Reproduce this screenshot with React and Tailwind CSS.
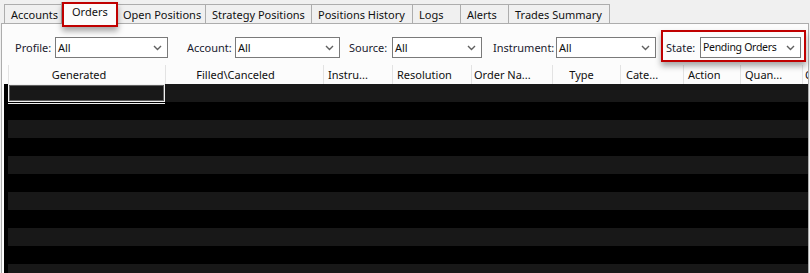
import React from "react";

const tabs = [
  ["Accounts", 58],
  ["Orders", 55, true],
  ["Open Positions", 89],
  ["Strategy Positions", 106],
  ["Positions History", 101],
  ["Logs", 48],
  ["Alerts", 48],
  ["Trades Summary", 101],
];

const cols = [
  ["Generated", 157, "center", "pr-[16px]"],
  ["Filled\\Canceled", 158, "center", "pr-[18px]"],
  ["Instru...", 69, "left", "pl-[4px]"],
  ["Resolution", 79, "left", "pl-[4px]"],
  ["Order Na...", 81, "left", "pl-[2px]"],
  ["Type", 68, "center", "pr-[10px]"],
  ["Cate...", 63, "left", "pl-[5px]"],
  ["Action", 57, "left", "pl-[4px]"],
  ["Quan...", 62, "left", "pl-[4px]"],
  ["Q", 40, "left", "pl-[2px]"],
];

function Chevron() {
  return (
    <svg width="9" height="6" viewBox="0 0 9 6" className="shrink-0">
      <polyline points="1,1 4.5,4.5 8,1" fill="none" stroke="#606060" strokeWidth="1.4" />
    </svg>
  );
}

function Select({ w, value, tight }) {
  return (
    <div
      className="h-[21px] shrink-0 border border-[#7a7a7a] bg-white flex items-center justify-between pl-[2px] pr-[5px] text-[#101010] whitespace-nowrap"
      style={{ width: w }}
    >
      <span className={tight ? "tracking-[-0.3px] text-[10.5px]" : ""}>{value}</span>
      <Chevron />
    </div>
  );
}

function Label({ w, ml, children }) {
  return (
    <span className="shrink-0" style={{ width: w, marginLeft: ml }}>
      {children}
    </span>
  );
}

export default function App() {
  return (
    <div
      className="relative w-[810px] h-[273px] overflow-hidden bg-[#f0f0f0] text-[11px] leading-none text-[#1a1a2e] whitespace-nowrap"
      style={{ fontFamily: '"Noto Sans", "Open Sans", sans-serif' }}
    >
      {/* tab strip */}
      <div className="relative z-10 flex items-end h-[23px] pl-[4px]">
        {tabs.map(([label, w, sel], i) =>
          sel ? (
            <div
              key={label}
              className="h-[22px] shrink-0 -mb-px -mx-[1px] border border-b-0 border-[#adadad] bg-[#fcfcfc] pl-[10px] pt-[3px] text-[#101010]"
              style={{ width: w + 2 }}
            >
              {label}
            </div>
          ) : (
            <div
              key={label}
              className={`h-[19px] shrink-0 border-t border-r border-[#adadad] bg-[#f0f0f0] pl-[6px] pt-[4px] text-[#101010] ${i === 0 ? "border-l" : ""}`}
              style={{ width: w }}
            >
              {label}
            </div>
          )
        )}
      </div>

      {/* panel */}
      <div className="ml-[1px] w-[808px] h-[251px] border border-[#adadad] bg-[#fcfcfc] flex flex-col">
        {/* filter row */}
        <div className="flex items-center h-[21px] mt-[13px] pl-[13px]">
          <Label w={40} ml={0}>Profile:</Label>
          <Select w={113} value="All" />
          <Label w={48} ml={19}>Account:</Label>
          <Select w={105} value="All" />
          <Label w={43} ml={9}>Source:</Label>
          <Select w={90} value="All" />
          <Label w={63} ml={11}>Instrument:</Label>
          <Select w={100} value="All" />
          <Label w={34} ml={10}>State:</Label>
          <Select w={101} value="Pending Orders" tight />
        </div>

        {/* grid */}
        <div className="mt-[7px] ml-[2px] flex-1 bg-black flex flex-col overflow-hidden">
          <div className="flex h-[19px] shrink-0 bg-[#fcfcfc]">
            <div className="w-[4px] shrink-0" />
            {cols.map(([label, w, align, pad]) => (
              <div
                key={label}
                className={`shrink-0 h-full border-l border-[#e3e3e3] flex items-center overflow-hidden text-[#101010] ${align === "center" ? "justify-center" : "justify-start"} ${pad}`}
                style={{ width: w }}
              >
                {label}
              </div>
            ))}
          </div>
          <div className="relative flex flex-col pl-[4px]">
            {Array.from({ length: 11 }).map((_, i) => (
              <div
                key={i}
                className={`h-[18px] shrink-0 ${i % 2 === 0 ? "bg-[#181818]" : "bg-black"}`}
              />
            ))}
            <div className="absolute left-[4px] top-0 w-[157px] h-[18px] border border-[#f0f0f0]" />
            <div className="absolute left-[5px] top-[1px] w-[155px] h-[16px] border border-[#606060]" />
            <div className="absolute left-[4px] top-[19px] w-[157px] h-px bg-[#f0f0f0]" />
          </div>
        </div>
      </div>

      {/* annotation boxes */}
      <div className="absolute left-[62px] top-[2px] w-[56px] h-[25px] border-2 border-[#c00000] shadow-[0_4px_6px_rgba(0,0,0,0.35)] z-20" />
      <div className="absolute left-[661px] top-[30px] w-[145px] h-[32px] border-2 border-[#c00000] shadow-[0_4px_6px_rgba(0,0,0,0.35)] z-20" />
    </div>
  );
}
